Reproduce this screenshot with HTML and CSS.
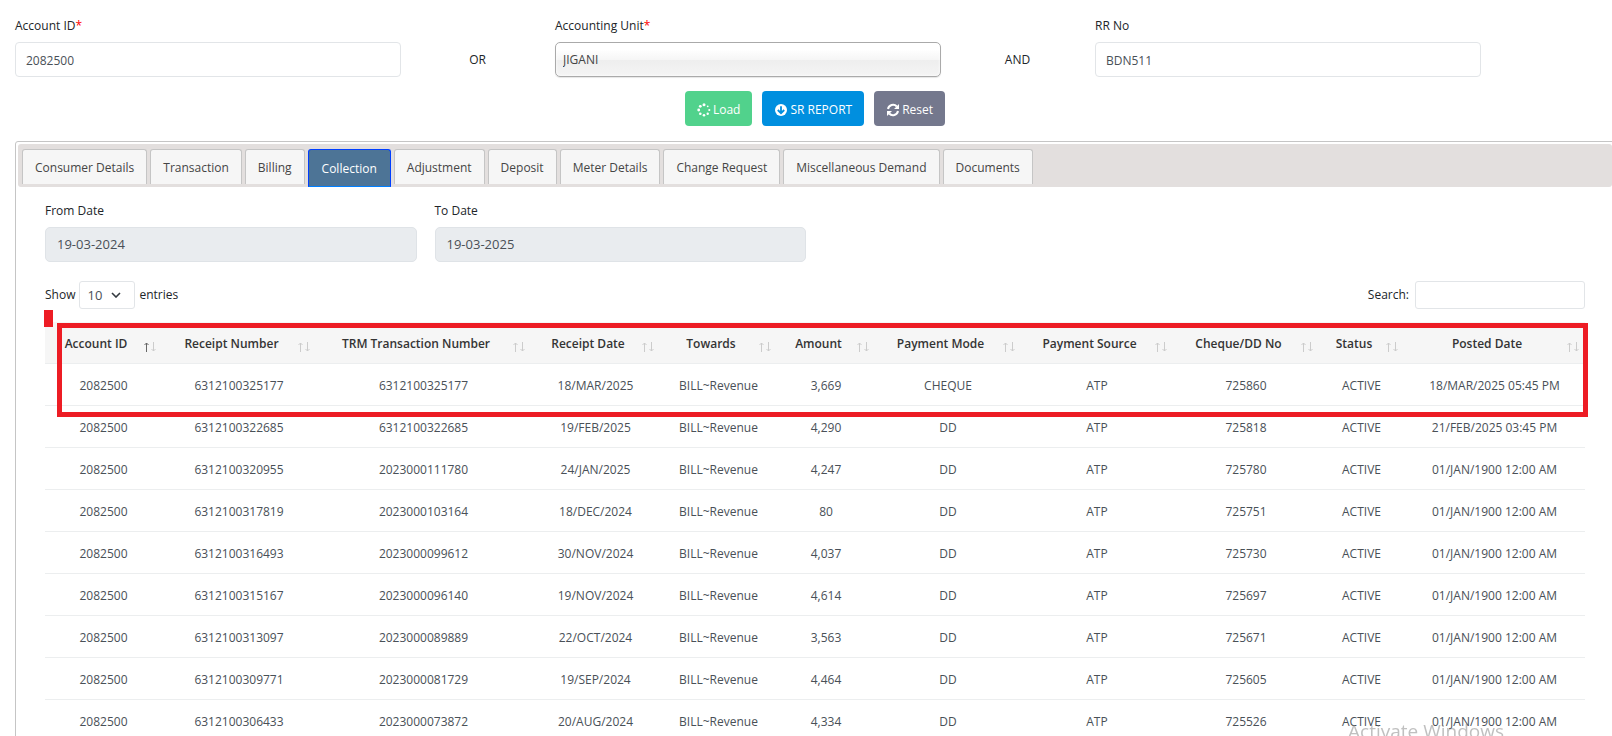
FILE: index.html
```
<!DOCTYPE html>
<html lang="en">

<head>
    <meta charset="UTF-8">
    <title>Consumer Ledger</title>
    <link rel="stylesheet" href="styles.css">
</head>

<body>
    <svg class="icon-defs" aria-hidden="true">
        <symbol id="sort" viewBox="0 0 12 10">
            <path class="up" d="M2.5 10V1M0.5 3L2.5 1L4.5 3" />
            <path class="down" d="M9.5 0V9M7.5 7L9.5 9L11.5 7" />
        </symbol>
    </svg>

    <form class="search-form" onsubmit="return false">
        <div class="search-row">
            <div class="field">
                <label for="account-id">Account ID<span class="required">*</span></label>
                <input class="form-control" id="account-id" type="text" value="2082500">
            </div>
            <div class="joiner">OR</div>
            <div class="field">
                <label for="unit">Accounting Unit<span class="required">*</span></label>
                <select class="form-control unit-select" id="unit">
                    <option>JIGANI</option>
                </select>
            </div>
            <div class="joiner">AND</div>
            <div class="field">
                <label for="rr-no">RR No</label>
                <input class="form-control" id="rr-no" type="text" value="BDN511">
            </div>
        </div>
        <div class="buttons">
            <button class="btn btn-load" type="button">
                <svg class="icon" viewBox="0 0 14 14" fill="#fff">
                    <circle cx="7" cy="1.8" r="1.5" />
                    <circle cx="10.7" cy="3.3" r="0.9" />
                    <circle cx="12.3" cy="7" r="1.1" />
                    <circle cx="10.7" cy="10.7" r="1.2" />
                    <circle cx="7" cy="12.3" r="1.3" />
                    <circle cx="3.3" cy="10.7" r="1.3" />
                    <circle cx="1.7" cy="7" r="1.4" />
                    <circle cx="3.3" cy="3.3" r="1.4" />
                </svg>
                Load
            </button>
            <button class="btn btn-report" type="button">
                <svg class="icon" viewBox="0 0 14 14">
                    <circle cx="7" cy="7" r="6" fill="#fff" />
                    <path d="M7 3.2V10M3.8 7L7 10.2L10.2 7" fill="none" stroke="#008fdf" stroke-width="1.8" />
                </svg>
                SR REPORT
            </button>
            <button class="btn btn-reset" type="button">
                <svg class="icon" viewBox="0 0 14 14">
                    <path d="M2 6A5.1 5.1 0 0 1 10.8 3.5M12 8A5.1 5.1 0 0 1 3.2 10.5" fill="none" stroke="#fff" stroke-width="2" />
                    <path d="M13 1V6H8ZM1 13V8H6Z" fill="#fff" />
                </svg>
                Reset
            </button>
        </div>
    </form>

    <div class="tabs">
        <div class="tab-nav" role="tablist">
            <button class="tab" role="tab">Consumer Details</button>
            <button class="tab" role="tab">Transaction</button>
            <button class="tab" role="tab">Billing</button>
            <button class="tab active" role="tab" aria-selected="true">Collection</button>
            <button class="tab" role="tab">Adjustment</button>
            <button class="tab" role="tab">Deposit</button>
            <button class="tab" role="tab">Meter Details</button>
            <button class="tab" role="tab">Change Request</button>
            <button class="tab" role="tab">Miscellaneous Demand</button>
            <button class="tab" role="tab">Documents</button>
        </div>

        <div class="tab-panel">
            <div class="date-row">
                <div class="date-field">
                    <label for="from-date">From Date</label>
                    <input class="form-control date" id="from-date" type="text" value="19-03-2024" readonly>
                </div>
                <div class="date-field">
                    <label for="to-date">To Date</label>
                    <input class="form-control date" id="to-date" type="text" value="19-03-2025" readonly>
                </div>
            </div>

            <div class="table-tools">
                <div class="length">
                    <label for="length">Show</label>
                    <span class="length-box">
                        <select id="length">
                            <option>10</option>
                        </select>
                        <svg class="chevron" viewBox="0 0 10 6"><path d="M1 1L5 5L9 1" /></svg>
                    </span>
                    entries
                </div>
                <div class="filter">
                    <label for="search">Search:</label>
                    <input id="search" type="search">
                </div>
            </div>

            <div class="table-wrap">
                <table class="collection">
                    <colgroup>
                        <col class="w-account">
                        <col class="w-receipt">
                        <col class="w-trm">
                        <col class="w-date">
                        <col class="w-towards">
                        <col class="w-amount">
                        <col class="w-mode">
                        <col class="w-source">
                        <col class="w-cheque">
                        <col class="w-status">
                        <col class="w-posted">
                    </colgroup>
                    <thead>
                        <tr>
                            <th class="sorted">Account ID<svg class="sort"><use href="#sort" /></svg></th>
                            <th>Receipt Number<svg class="sort"><use href="#sort" /></svg></th>
                            <th>TRM Transaction Number<svg class="sort"><use href="#sort" /></svg></th>
                            <th>Receipt Date<svg class="sort"><use href="#sort" /></svg></th>
                            <th>Towards<svg class="sort"><use href="#sort" /></svg></th>
                            <th>Amount<svg class="sort"><use href="#sort" /></svg></th>
                            <th>Payment Mode<svg class="sort"><use href="#sort" /></svg></th>
                            <th>Payment Source<svg class="sort"><use href="#sort" /></svg></th>
                            <th>Cheque/DD No<svg class="sort"><use href="#sort" /></svg></th>
                            <th>Status<svg class="sort"><use href="#sort" /></svg></th>
                            <th>Posted Date<svg class="sort"><use href="#sort" /></svg></th>
                        </tr>
                    </thead>
                    <tbody>
                        <tr><td>2082500</td><td>6312100325177</td><td>6312100325177</td><td>18/MAR/2025</td><td>BILL~Revenue</td><td>3,669</td><td>CHEQUE</td><td>ATP</td><td>725860</td><td>ACTIVE</td><td>18/MAR/2025 05:45 PM</td></tr>
                        <tr><td>2082500</td><td>6312100322685</td><td>6312100322685</td><td>19/FEB/2025</td><td>BILL~Revenue</td><td>4,290</td><td>DD</td><td>ATP</td><td>725818</td><td>ACTIVE</td><td>21/FEB/2025 03:45 PM</td></tr>
                        <tr><td>2082500</td><td>6312100320955</td><td>2023000111780</td><td>24/JAN/2025</td><td>BILL~Revenue</td><td>4,247</td><td>DD</td><td>ATP</td><td>725780</td><td>ACTIVE</td><td>01/JAN/1900 12:00 AM</td></tr>
                        <tr><td>2082500</td><td>6312100317819</td><td>2023000103164</td><td>18/DEC/2024</td><td>BILL~Revenue</td><td>80</td><td>DD</td><td>ATP</td><td>725751</td><td>ACTIVE</td><td>01/JAN/1900 12:00 AM</td></tr>
                        <tr><td>2082500</td><td>6312100316493</td><td>2023000099612</td><td>30/NOV/2024</td><td>BILL~Revenue</td><td>4,037</td><td>DD</td><td>ATP</td><td>725730</td><td>ACTIVE</td><td>01/JAN/1900 12:00 AM</td></tr>
                        <tr><td>2082500</td><td>6312100315167</td><td>2023000096140</td><td>19/NOV/2024</td><td>BILL~Revenue</td><td>4,614</td><td>DD</td><td>ATP</td><td>725697</td><td>ACTIVE</td><td>01/JAN/1900 12:00 AM</td></tr>
                        <tr><td>2082500</td><td>6312100313097</td><td>2023000089889</td><td>22/OCT/2024</td><td>BILL~Revenue</td><td>3,563</td><td>DD</td><td>ATP</td><td>725671</td><td>ACTIVE</td><td>01/JAN/1900 12:00 AM</td></tr>
                        <tr><td>2082500</td><td>6312100309771</td><td>2023000081729</td><td>19/SEP/2024</td><td>BILL~Revenue</td><td>4,464</td><td>DD</td><td>ATP</td><td>725605</td><td>ACTIVE</td><td>01/JAN/1900 12:00 AM</td></tr>
                        <tr><td>2082500</td><td>6312100306433</td><td>2023000073872</td><td>20/AUG/2024</td><td>BILL~Revenue</td><td>4,334</td><td>DD</td><td>ATP</td><td>725526</td><td>ACTIVE</td><td>01/JAN/1900 12:00 AM</td></tr>
                    </tbody>
                </table>
                <div class="mark-block"></div>
                <div class="mark-frame"></div>
            </div>
        </div>
    </div>

    <div class="watermark">Activate Windows</div>
</body>

</html>
```
FILE: styles.css
```
* {
    box-sizing: border-box;
}

body {
    margin: 0;
    background: #fff;
    color: #212529;
    font-family: "Open Sans", "Noto Sans", sans-serif;
    font-size: 12px;
    line-height: 20px;
    overflow: hidden;
}

input,
select,
button {
    font: inherit;
}

.icon-defs {
    display: none;
}

/* search form */
.search-form {
    margin-right: -13px;
    padding: 16px 0 0 5px;
}

.search-row {
    display: grid;
    grid-template-columns: 3fr 1fr 3fr 1fr 3fr 1fr;
    align-items: end;
}

.field {
    display: flex;
    flex-direction: column;
    gap: 6px;
    padding: 0 9px 0 10px;
}

.required {
    color: #f00;
}

.form-control {
    width: 100%;
    height: 35px;
    padding: 1px 10px 0;
    border: 1px solid #e2e5e8;
    border-radius: 4px;
    background: #fff;
    color: #495057;
}

.unit-select {
    appearance: none;
    padding: 0 7px;
    border-color: #aaa;
    border-radius: 5px;
    background: linear-gradient(#fff 20%, #f6f6f6 50%, #eee 52%, #f4f4f4 100%);
    box-shadow: 0 0 3px #fff inset, 0 1px 1px rgba(0, 0, 0, 0.1);
    color: #444;
}

.joiner {
    padding-top: 2px;
    line-height: 34px;
    text-align: center;
}

.buttons {
    display: flex;
    justify-content: center;
    gap: 10px;
    padding-top: 14px;
}

.btn {
    display: flex;
    align-items: center;
    gap: 2px;
    height: 35px;
    padding: 2px 12px 0;
    border: none;
    border-radius: 4px;
    color: #fff;
}

.btn-load {
    background: #51d28c;
}

.btn-report {
    background: #008fdf;
}

.btn-reset {
    background: #74788d;
}

.icon {
    width: 14px;
    height: 14px;
}

/* tabs */
.tabs {
    margin: 15px -3px 0 15px;
    padding: 2px;
    border: 1px solid #c5c5c5;
    border-radius: 3px;
}

.tab-nav {
    display: flex;
    gap: 3px;
    height: 43px;
    padding: 5px 4px 0;
    border-radius: 3px;
    background: #e3dfde;
}

.tab {
    height: 35px;
    padding: 2px 12px 0;
    border: 1px solid #c5c5c5;
    border-bottom: none;
    border-radius: 3px 3px 0 0;
    background: #f6f6f6;
    color: #454545;
    white-space: nowrap;
}

.tab.active {
    height: 38px;
    padding: 1px 13px 0;
    border: 1px solid #003eff;
    border-bottom-color: #007fff;
    background: #4d7496;
    color: #fff;
}

.tab-panel {
    padding: 14px 27px;
}

.date-row {
    display: grid;
    grid-template-columns: repeat(4, 1fr);
    gap: 18px;
}

.date-field {
    display: flex;
    flex-direction: column;
    gap: 6px;
}

.date {
    padding: 0 11px 1px;
    border-color: #dfe3e7;
    border-radius: 5px;
    background: #e9ecef;
    font-size: 13px;
}

/* table */
.table-tools {
    display: flex;
    justify-content: space-between;
    padding: 19px 0 13px;
}

.length,
.filter {
    display: flex;
    align-items: center;
    gap: 4px;
}

.filter {
    gap: 6px;
}

.length-box {
    position: relative;
}

.length select {
    display: block;
    appearance: none;
    width: 56px;
    height: 28px;
    padding: 0 7px 1px;
    border: 1px solid #e2e5e8;
    border-radius: 3px;
    background: #fff;
    color: #495057;
    font-size: 13px;
}

.chevron {
    position: absolute;
    top: 11px;
    right: 14px;
    width: 10px;
    height: 6px;
    fill: none;
    stroke: #343a40;
    stroke-width: 1.6;
    pointer-events: none;
}

.filter input {
    width: 170px;
    height: 28px;
    border: 1px solid #e2e5e8;
    border-radius: 3px;
}

.table-wrap {
    position: relative;
}

.collection {
    width: 100%;
    table-layout: fixed;
    border-spacing: 0;
    text-align: center;
    white-space: nowrap;
}

.w-account { width: 117px; }
.w-receipt { width: 154px; }
.w-trm { width: 215px; }
.w-date { width: 129px; }
.w-towards { width: 117px; }
.w-amount { width: 98px; }
.w-mode { width: 146px; }
.w-source { width: 152px; }
.w-cheque { width: 146px; }
.w-status { width: 85px; }
.w-posted { width: 181px; }

th,
td {
    height: 42px;
    padding: 2px 0 0;
    border-bottom: 1px solid #eceeef;
}

th {
    position: relative;
    padding: 2px 15px 0 0;
    background: #f6f6f6;
    color: #343434;
    font-weight: 600;
}

td {
    color: #495057;
}

.sort {
    position: absolute;
    right: 6px;
    bottom: 11px;
    width: 12px;
    height: 10px;
    fill: none;
    stroke: #ccc;
    --up: #ccc;
}

.up {
    stroke: var(--up);
}

.sorted .sort {
    --up: #666;
}

/* red highlight over the first row */
.mark-block {
    position: absolute;
    top: -12px;
    left: -1px;
    width: 9px;
    height: 17px;
    background: #ed1c24;
}

.mark-frame {
    position: absolute;
    top: 1px;
    left: 12px;
    right: -3px;
    height: 94px;
    border: 5px solid #ed1c24;
}

.watermark {
    position: fixed;
    right: 108px;
    bottom: -9px;
    color: rgba(130, 130, 130, 0.5);
    font-size: 19px;
    line-height: 28px;
}
```
